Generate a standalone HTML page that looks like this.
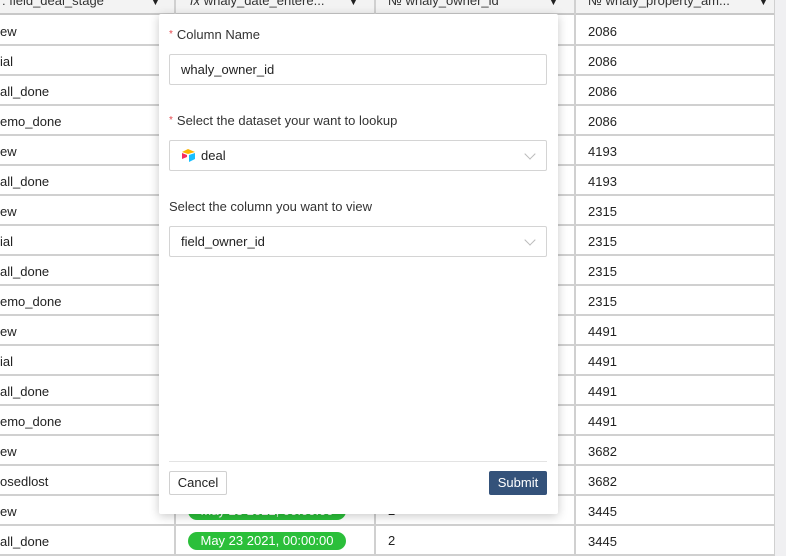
<!DOCTYPE html>
<html><head><style>
*{margin:0;padding:0;box-sizing:border-box}
body{width:786px;height:556px;overflow:hidden;background:#f0f0f2;font-family:"Liberation Sans",sans-serif;font-size:13px;color:#222;position:relative}
.grid{position:absolute;left:0;top:0;width:775px;height:556px;background:#fff}
.hdr{position:absolute;top:0;height:15px;background:#f3f3f3;border-bottom:2px solid #c8c8c8;width:775px}
.hl{position:absolute;left:0;width:775px;height:2px;background:#d0d0d0}
.vl{position:absolute;top:0;width:2px;height:556px;background:#d0d0d0}
.c{position:absolute;font-size:13px;color:#222}
.ht{position:absolute;top:-7px;font-size:13px;color:#333;white-space:nowrap}
.ar{position:absolute;top:-4px;font-size:11px;color:#222}
.modal{position:absolute;left:159px;top:14px;width:399px;height:500px;background:#fff;box-shadow:0 2px 10px rgba(0,0,0,.22);border-radius:2px}
.lbl{position:absolute;left:10px;font-size:13px;color:#333}
.lbl .s{color:#e5484d;font-size:10px;margin-right:4px;vertical-align:2px}
.inp{position:absolute;left:10px;width:378px;height:31px;border:1px solid #d4d4d4;border-radius:2px;padding-left:11px;line-height:29px;font-size:13px;color:#222}
.chev{position:absolute;right:12px;top:9px;width:8px;height:8px;border-right:1px solid #bbb;border-bottom:1px solid #bbb;transform:rotate(45deg)}
.pill{position:absolute;left:188px;width:158px;height:18px;border-radius:9px;background:#2bbf3a;color:#fff;text-align:center;line-height:18px;font-size:13px}
</style></head><body>
<div class="grid">
<div class="hdr"></div>
<div class="ht" style="left:2px">: field_deal_stage</div><div class="ar" style="left:150px">▼</div>
<div class="ht" style="left:190px"><i>fx</i> whaly_date_entere...</div><div class="ar" style="left:348px">▼</div>
<div class="ht" style="left:388px">№ whaly_owner_id</div><div class="ar" style="left:548px">▼</div>
<div class="ht" style="left:588px">№ whaly_property_am...</div><div class="ar" style="left:758px">▼</div>
<div class="vl" style="left:174px"></div><div class="vl" style="left:374px"></div><div class="vl" style="left:574px"></div><div class="vl" style="left:774px;width:1px"></div>
<div id="rows"></div>
<div class="pill" style="top:502px">May 23 2021, 00:00:00</div>
<div class="c" style="left:388px;top:503px">2</div>
<div class="pill" style="top:532px">May 23 2021, 00:00:00</div>
<div class="c" style="left:388px;top:533px">2</div>
</div>
<script>
var L=["ew","ial","all_done","emo_done","ew","all_done","ew","ial","all_done","emo_done","ew","ial","all_done","emo_done","ew","osedlost","ew","all_done"];
var R=["2086","2086","2086","2086","4193","4193","2315","2315","2315","2315","4491","4491","4491","4491","3682","3682","3445","3445"];
var h="";for(var i=0;i<18;i++){var t=16+i*30;h+='<div class="c" style="left:0;top:'+(t+8)+'px">'+L[i]+'</div><div class="c" style="left:588px;top:'+(t+8)+'px">'+R[i]+'</div><div class="hl" style="top:'+(t+28)+'px"></div>';}
document.getElementById("rows").innerHTML=h;
</script>
<div class="modal">
<div class="lbl" style="top:13px"><span class="s">*</span>Column Name</div>
<div class="inp" style="top:40px">whaly_owner_id</div>
<div class="lbl" style="top:99px"><span class="s">*</span>Select the dataset your want to lookup</div>
<div class="inp" style="top:126px;padding-left:11px"><svg width="16" height="13" viewBox="0 0 16 13" style="vertical-align:-2px;margin-right:4px"><path d="M7 0L1 3l6 2 7-2z" fill="#fcb400"/><path d="M8 6v7l6-3V4z" fill="#18bfff"/><path d="M1 4v6l5-2V6z" fill="#f82b60"/></svg>deal<div class="chev"></div></div>
<div class="lbl" style="top:185px">Select the column you want to view</div>
<div class="inp" style="top:212px">field_owner_id<div class="chev"></div></div>
<div style="position:absolute;left:10px;width:378px;top:447px;height:1px;background:#e3e3e3"></div>
<div style="position:absolute;left:10px;top:457px;width:58px;height:24px;border:1px solid #d0d0d0;border-radius:2px;text-align:center;line-height:22px;font-size:13px;color:#222">Cancel</div>
<div style="position:absolute;left:330px;top:457px;width:58px;height:24px;background:#34527a;border-radius:2px;text-align:center;line-height:24px;font-size:13px;color:#fff">Submit</div>
</div>
</body></html>
